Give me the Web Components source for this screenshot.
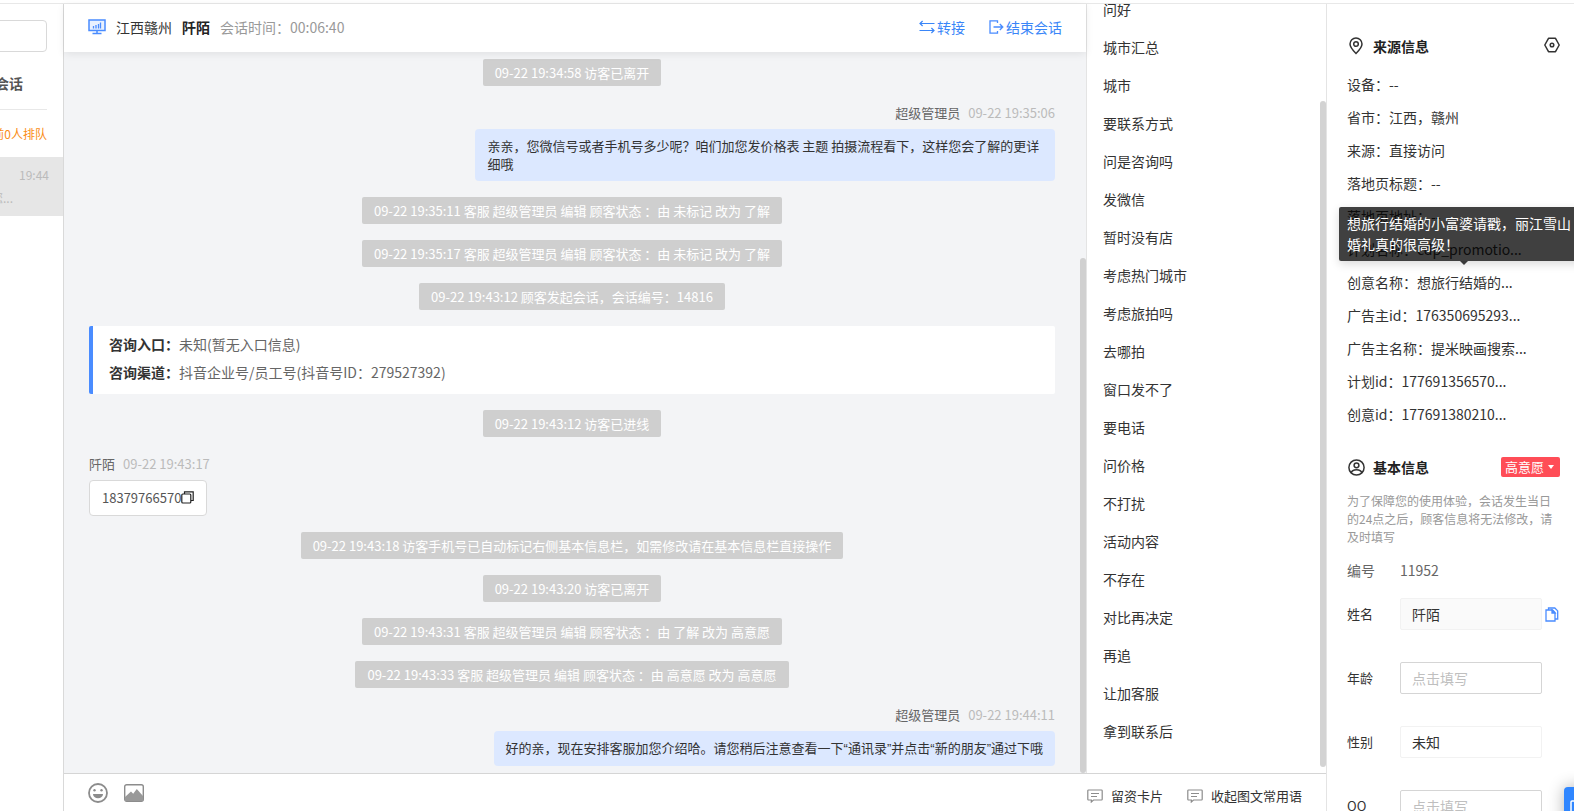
<!DOCTYPE html>
<html lang="zh-CN">
<head>
<meta charset="utf-8">
<title>客服会话</title>
<style>
  body{margin:0;background:#fff;color:#333;font:14px/20px "Noto Sans CJK SC",sans-serif}
</style>
</head>
<body>
<chat-app></chat-app>
<script>
const ICONS = {
  monitor: `<svg width="18" height="16" viewBox="0 0 18 16" fill="none" stroke="#4a8cff"><rect x="1" y="1" width="16" height="10.5" stroke-width="1.5" fill="#e9f1ff"/><path d="M5.5 9.5V7M8 9.5V6M10.5 9.5V5M12.5 9.5V3.5" stroke-width="1.3"/><path d="M9 11.5v2.5M4.5 14.5h9" stroke-width="1.5"/></svg>`,
  swap: `<svg width="16" height="14" viewBox="0 0 16 14" fill="none" stroke="#3a86f8" stroke-width="1.2"><path d="M15.5 3.5H1M3.6 1L1 3.500l2.600 2.500M.5 10.500H15M12.400 8l2.600 2.500-2.600 2.500"/></svg>`,
  exit: `<svg width="15" height="14" viewBox="0 0 15 14" fill="none" stroke="#4a8cff" stroke-width="1.3"><path d="M8.500 3V.8H1v12.400h7.500V11M4.500 7h9M10.800 4l3 3-3 3"/></svg>`,
  copy: `<svg width="13" height="13" viewBox="0 0 13 13" fill="none" stroke="#222" stroke-width="1.2"><rect x=".8" y="3" width="9" height="9" rx="1"/><path d="M3.500 3V.8h8.700v8.700H10"/></svg>`,
  doc: `<svg width="14" height="15" viewBox="0 0 14 15" fill="none" stroke="#4a8cff" stroke-width="1.3"><path d="M1 3h6.500L10 5.500V14H1zM3.500 3V1h6.300l2.900 2.900V12H10"/><path d="M7 3l3 3H7z" fill="#4a8cff"/></svg>`,
  pin: `<svg width="14" height="18" viewBox="0 0 14 18" fill="none" stroke="#333" stroke-width="1.5"><path d="M7 16.500C3 12.500 1 9.800 1 7a6 6 0 0 1 12 0c0 2.800-2 5.500-6 9.500z"/><circle cx="7" cy="7" r="2.300"/></svg>`,
  gear: `<svg width="16" height="16" viewBox="0 0 16 16" fill="none" stroke="#333" stroke-width="1.5"><path d="M4.500 1.300h7L15.200 8l-3.700 6.700h-7L.8 8z" stroke-linejoin="round"/><circle cx="8" cy="8" r="1.800"/></svg>`,
  user: `<svg width="17" height="17" viewBox="0 0 17 17" fill="none" stroke="#333" stroke-width="1.5"><circle cx="8.500" cy="8.500" r="7.600"/><circle cx="8.500" cy="6.300" r="2.400"/><path d="M3.200 13.800c1-4.200 9.600-4.200 10.600 0"/></svg>`,
  smile: `<svg width="20" height="20" viewBox="0 0 20 20"><circle cx="10" cy="10" r="9" fill="none" stroke="#8c8c8c" stroke-width="1.8"/><circle cx="6.500" cy="7.300" r="1.200" fill="#8c8c8c"/><circle cx="13.500" cy="7.300" r="1.200" fill="#8c8c8c"/><path d="M5 11h10a5 4.300 0 0 1-10 0z" fill="#8c8c8c"/></svg>`,
  image: `<svg width="20" height="18" viewBox="0 0 20 18"><rect x=".7" y=".7" width="18.600" height="16.600" rx="2" fill="none" stroke="#8c8c8c" stroke-width="1.4"/><path d="M1 13l6-5.500 2.200 2.300L12.800 5 19 12v5H1z" fill="#999"/></svg>`,
  card: `<svg width="16" height="14" viewBox="0 0 16 14" fill="none" stroke="#8c8c8c" stroke-width="1.2"><path d="M1.600 1h12.800q.8 0 .8.800v8.400q0 .8-.8.800H6.500L4.300 13V11H1.600q-.8 0-.8-.8V1.800q0-.8.800-.8zM4 4.500h8M4 7.500h6"/></svg>`,
  window: `<svg width="16" height="14" viewBox="0 0 16 14" fill="none" stroke="#fff" stroke-width="1.5"><rect x="1" y="1" width="14" height="12" rx="1"/></svg>`
};

class Base extends HTMLElement {
  constructor() { super(); this.attachShadow({ mode: "open" }); }
  connectedCallback() {
    this.shadowRoot.innerHTML = `<style>*,*::before,*::after{box-sizing:border-box}:host{display:block}button{font:inherit;color:inherit;background:none;border:0;padding:0;cursor:pointer}svg{display:block;flex:none}${this.css()}</style>${this.html()}`;
  }
  css() { return ""; }
  html() { return "<slot></slot>"; }
}

class SystemNote extends Base {
  css() { return `:host{align-self:center;padding:4px 12px;border-radius:2px;background:#cfcfcf;color:#fff;font-size:13px;line-height:19px;white-space:nowrap}`; }
}

class ChatMessage extends Base {
  css() {
    return `
      :host{display:flex;flex-direction:column;align-items:flex-start;font-size:13px;line-height:18px}
      :host([mine]){align-items:flex-end}
      .meta{display:flex;gap:8px;line-height:22px;margin-bottom:5px;color:#666}
      time{color:#bbb}
      .bubble{display:flex;align-items:flex-start;max-width:60%;padding:8px 12px;border:1px solid #d9d9d9;border-radius:4px;background:#fff;color:#555}
      :host([mine]) .bubble{padding:8px 12px;border:0;background:#dce8ff;color:#333}
      button{padding-top:2px}
    `;
  }
  html() {
    const copy = this.hasAttribute("copy") ? `<button aria-label="复制">${ICONS.copy}</button>` : "";
    return `<div class="meta"><span>${this.getAttribute("name")}</span><time>${this.getAttribute("time")}</time></div>
      <div class="bubble"><span><slot></slot></span>${copy}</div>`;
  }
}

class EntryCard extends Base {
  css() {
    return `
      :host{padding:4px 16px 8px;border-left:4px solid #4a8cff;border-radius:2px;background:#fff;line-height:28px;color:#666}
      dl{margin:0}
      div{display:flex}
      dt{font-weight:700;color:#333}
      dd{margin:0}
    `;
  }
  html() {
    return `<dl><div><dt>咨询入口：</dt><dd>未知(暂无入口信息)</dd></div>
      <div><dt>咨询渠道：</dt><dd>抖音企业号/员工号(抖音号ID：279527392)</dd></div></dl>`;
  }
}

class ChatHeader extends Base {
  css() {
    return `
      :host{display:flex;align-items:center;height:48px;padding:0 24px 2px;background:#fff;box-shadow:0 2px 8px rgba(0,0,0,.08);position:relative;z-index:1;flex:none}
      .who{display:flex;align-items:center;gap:10px;flex:1}
      b{font-weight:700;color:#222}
      .time{color:#999}
      .acts{display:flex;gap:24px;color:#3a86f8}
      button{display:flex;align-items:center;gap:2px}
    `;
  }
  html() {
    return `<div class="who">${ICONS.monitor}<span>江西赣州</span><b>阡陌</b><span class="time">会话时间：00:06:40</span></div>
      <div class="acts"><button>${ICONS.swap}转接</button><button>${ICONS.exit}结束会话</button></div>`;
  }
}

class ChatPane extends Base {
  css() {
    return `
      :host{display:flex;flex-direction:column;flex:1;min-width:0;min-height:0;background:#f3f4f6}
      .log{position:relative;display:flex;flex-direction:column;flex:1;min-height:0;overflow:hidden}
      .items{display:flex;flex-direction:column;gap:16px;padding:7px 31px 8px 25px}
      .thumb{position:absolute;right:0;top:206px;bottom:0;width:6px;border-radius:3px;background:#d0d0d0}
      /* narrow quotes, the CJK face draws them full width */
      q{quotes:none;font-family:"Liberation Sans",sans-serif}
    `;
  }
  html() {
    return `<chat-header></chat-header>
      <div class="log"><div class="items">
        <system-note>09-22 19:34:58 访客已离开</system-note>
        <chat-message mine name="超级管理员" time="09-22 19:35:06">亲亲，您微信号或者手机号多少呢？咱们加您发价格表 主题 拍摄流程看下，这样您会了解的更详细哦</chat-message>
        <system-note>09-22 19:35:11 客服 超级管理员 编辑 顾客状态 ：由 未标记 改为 了解</system-note>
        <system-note>09-22 19:35:17 客服 超级管理员 编辑 顾客状态 ：由 未标记 改为 了解</system-note>
        <system-note>09-22 19:43:12 顾客发起会话，会话编号：14816</system-note>
        <entry-card></entry-card>
        <system-note>09-22 19:43:12 访客已进线</system-note>
        <chat-message copy name="阡陌" time="09-22 19:43:17">18379766570</chat-message>
        <system-note>09-22 19:43:18 访客手机号已自动标记右侧基本信息栏，如需修改请在基本信息栏直接操作</system-note>
        <system-note>09-22 19:43:20 访客已离开</system-note>
        <system-note>09-22 19:43:31 客服 超级管理员 编辑 顾客状态 ：由 了解 改为 高意愿</system-note>
        <system-note>09-22 19:43:33 客服 超级管理员 编辑 顾客状态 ：由 高意愿 改为 高意愿</system-note>
        <chat-message mine name="超级管理员" time="09-22 19:44:11">好的亲，现在安排客服加您介绍哈。请您稍后注意查看一下<q>“</q>通讯录<q>”</q>并点击<q>“</q>新的朋友<q>”</q>通过下哦</chat-message>
      </div><div class="thumb"></div></div>`;
  }
}

class PhraseList extends Base {
  css() {
    return `
      :host{position:relative;width:240px;flex:none;overflow:hidden;border-left:1px solid #e4e4e4;background:#fff}
      ul{list-style:none;margin:-14px 0 0;padding:0 16px}
      li{line-height:38px}
      .thumb{position:absolute;right:0;top:97px;bottom:6px;width:6px;border-radius:3px;background:#d3d3d3}
    `;
  }
  html() {
    const list = ["问好", "城市汇总", "城市", "要联系方式", "问是咨询吗", "发微信", "暂时没有店", "考虑热门城市", "考虑旅拍吗", "去哪拍", "窗口发不了", "要电话", "问价格", "不打扰", "活动内容", "不存在", "对比再决定", "再追", "让加客服", "拿到联系后"];
    return `<ul>${list.map((t) => `<li>${t}</li>`).join("")}</ul><div class="thumb"></div>`;
  }
}

class ChatToolbar extends Base {
  css() {
    return `
      :host{display:flex;justify-content:space-between;height:38px;padding:0 24px;border-top:1px solid #d5d5d5;background:#fff;flex:none;font-size:13px}
      div{display:flex;align-items:center;gap:16px}
      .text{gap:24px;padding-top:6px}
      .text button{display:flex;align-items:center;gap:8px}
    `;
  }
  html() {
    return `<div><button aria-label="表情">${ICONS.smile}</button><button aria-label="图片">${ICONS.image}</button></div>
      <div class="text"><button>${ICONS.card}留资卡片</button><button>${ICONS.card}收起图文常用语</button></div>`;
  }
}

class SessionList extends Base {
  css() {
    return `
      :host{width:64px;flex:none;overflow:hidden;border-right:1px solid #d9d9d9;background:#fff}
      .top{display:flex;flex-direction:column;align-items:flex-end;padding:16px 16px 0 0}
      input{width:240px;height:32px;border:1px solid #d9d9d9;border-radius:4px;font:inherit;outline:0}
      .tab{width:240px;padding:21px 24px 16px 0;border-bottom:1px solid #e8e8e8;text-align:right;font-weight:700;color:#555}
      .queue{padding:14px 0 13px;font-size:12px;color:#fa8c16;white-space:nowrap}
      .item{display:flex;flex-direction:column;align-items:flex-end;height:59px;padding:8px 14px 0 0;background:#e6e6e6;color:#bbb;font-size:12px;white-space:nowrap}
      .msg{display:flex;justify-content:flex-end;width:49px;padding:4px 36px 0 0;line-height:18px}
    `;
  }
  html() {
    return `<div class="top"><input type="text" aria-label="搜索"><div class="tab">会话</div><div class="queue">当前0人排队</div></div>
      <div class="item"><time>19:44</time><div class="msg">您...</div></div>`;
  }
}

class HoverTip extends Base {
  css() {
    return `
      :host{position:absolute;left:-8px;bottom:calc(100% + 5px);width:250px;padding:6px 8px;border-radius:2px;background:rgba(0,0,0,.75);color:#fff;line-height:21px;white-space:normal;box-shadow:0 3px 10px rgba(0,0,0,.15)}
      :host::after{content:"";position:absolute;left:50%;top:100%;border:4px solid transparent;border-top-color:rgba(0,0,0,.75);border-bottom:0;transform:translateX(-50%)}
    `;
  }
}

class SectionTitle extends Base {
  css() {
    return `
      :host{display:flex;align-items:center;gap:8px;height:22px}
      .ico{width:18px;display:flex;justify-content:center}
      h3{flex:1;margin:0;font-size:14px;font-weight:700;color:#222}
    `;
  }
  html() { return `<span class="ico">${ICONS[this.getAttribute("icon")]}</span><h3>${this.getAttribute("label")}</h3><slot></slot>`; }
}

class InfoField extends Base {
  css() {
    return `
      :host{display:flex;align-items:center;height:32px;margin-bottom:32px}
      label{width:53px;flex:none;font-size:13px}
      input{width:142px;height:32px;padding:0 11px;border:1px solid #d5d5d5;border-radius:2px;background:#fff;color:#333;font:inherit;outline:0}
      input::placeholder{color:#bfbfbf;opacity:1}
      :host([soft]) input{border-color:#f2f2f2}
      :host([copy]) input{background:#fafafa}
      button{margin-left:3px}
    `;
  }
  html() {
    const copy = this.hasAttribute("copy") ? `<button aria-label="复制">${ICONS.doc}</button>` : "";
    return `<label for="f">${this.getAttribute("label")}</label><input id="f" type="text" placeholder="点击填写" value="${this.getAttribute("value") || ""}">${copy}`;
  }
}

class InfoPanel extends Base {
  css() {
    return `
      :host{width:248px;flex:none;overflow:hidden;border-left:1px solid #e4e4e4;background:#fff;padding:31px 14px 0 20px}
      .gear{padding-bottom:2px}
      .rows{margin-top:11px}
      .rows div{position:relative;line-height:33px;white-space:nowrap}
      .basic{margin-top:25px}
      .tag{display:flex;align-items:center;gap:4px;height:20px;padding:0 6px 0 4px;border-radius:2px;background:#ff4d57;color:#fff;font-size:13px}
      .tag::after{content:"";border:3px solid transparent;border-top:4px solid #fff;border-bottom:0}
      p{margin:14px 0;font-size:12px;line-height:18px;color:#999}
      .no{display:flex;margin-bottom:18px;color:#666}
      .no span{width:53px}
    `;
  }
  html() {
    const rows = [["设备", "--"], ["省市", "江西，赣州"], ["来源", "直接访问"], ["落地页标题", "--"], ["落地页地址", "--"], ["计划名称", "cdp_promotio..."], ["创意名称", "想旅行结婚的...", "想旅行结婚的小富婆请戳，丽江雪山婚礼真的很高级！"], ["广告主id", "176350695293..."], ["广告主名称", "提米映画搜索..."], ["计划id", "177691356570..."], ["创意id", "177691380210..."]];
    return `<section-title icon="pin" label="来源信息"><button class="gear" aria-label="设置">${ICONS.gear}</button></section-title>
      <div class="rows">${rows.map(([k, v, tip]) => `<div>${k}：${v}${tip ? `<hover-tip>${tip}</hover-tip>` : ""}</div>`).join("")}</div>
      <section-title class="basic" icon="user" label="基本信息"><button class="tag">高意愿</button></section-title>
      <p>为了保障您的使用体验，会话发生当日的24点之后，顾客信息将无法修改，请及时填写</p>
      <div class="no"><span>编号</span>11952</div>
      <info-field label="姓名" value="阡陌" soft copy></info-field>
      <info-field label="年龄"></info-field>
      <info-field label="性别" value="未知" soft></info-field>
      <info-field label="QQ"></info-field>`;
  }
}

class ChatApp extends Base {
  css() {
    return `
      :host{display:flex;box-sizing:border-box;height:100vh;padding-top:3px;overflow:hidden;position:relative}
      .shell{display:flex;flex:1;min-width:0;border-top:1px solid #e8e8e8}
      .work{display:flex;flex-direction:column;flex:1;min-width:0}
      .cols{display:flex;flex:1;min-height:0}
      .float{position:absolute;right:-30px;bottom:-16px;width:40px;height:40px;padding:9px 6px;border-radius:4px;background:#2f86ff;box-shadow:0 0 16px rgba(0,0,0,.3)}
    `;
  }
  html() {
    return `<div class="shell"><session-list></session-list>
      <div class="work"><div class="cols"><chat-pane></chat-pane><phrase-list></phrase-list></div><chat-toolbar></chat-toolbar></div>
      <info-panel></info-panel></div>
      <button class="float" aria-label="打开窗口">${ICONS.window}</button>`;
  }
}

customElements.define("system-note", SystemNote);
customElements.define("chat-message", ChatMessage);
customElements.define("entry-card", EntryCard);
customElements.define("chat-header", ChatHeader);
customElements.define("chat-pane", ChatPane);
customElements.define("phrase-list", PhraseList);
customElements.define("chat-toolbar", ChatToolbar);
customElements.define("session-list", SessionList);
customElements.define("hover-tip", HoverTip);
customElements.define("section-title", SectionTitle);
customElements.define("info-field", InfoField);
customElements.define("info-panel", InfoPanel);
customElements.define("chat-app", ChatApp);
</script>
</body>
</html>
